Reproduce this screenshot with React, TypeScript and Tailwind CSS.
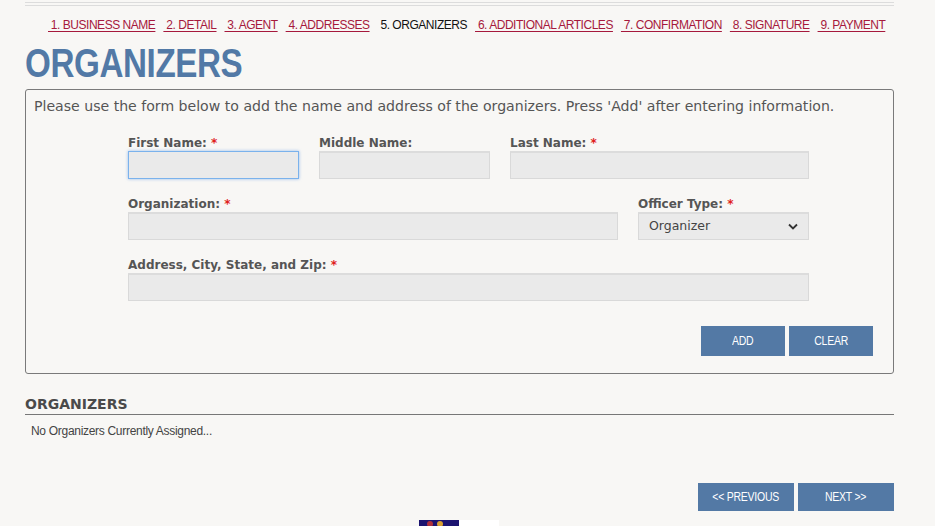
import React from "react";

const navItems = [
  { t: "1. BUSINESS NAME", link: true },
  { t: "2. DETAIL", link: true },
  { t: "3. AGENT", link: true },
  { t: "4. ADDRESSES", link: true },
  { t: "5. ORGANIZERS", link: false },
  { t: "6. ADDITIONAL ARTICLES", link: true },
  { t: "7. CONFIRMATION", link: true },
  { t: "8. SIGNATURE", link: true },
  { t: "9. PAYMENT", link: true },
];

const Label = ({ text, req }: { text: string; req?: boolean }) => (
  <div className="font-['DejaVu_Sans',sans-serif] font-bold text-[12px] leading-[14px] text-[#555] mb-[1px]">
    {text}
    {req && <span className="text-[#e0201b]"> *</span>}
  </div>
);

const inputCls =
  "h-[28px] w-full bg-[#eaeaea] border border-[#d9d9d9] border-t-[2px] border-t-[#dcdcdc] outline-none";

const Btn = ({ w, h, children }: { w: string; h: string; children: React.ReactNode }) => (
  <button className={"bg-[#5379a5] text-white flex items-center justify-center " + w + " " + h}>
    <span className="inline-block scale-x-[0.84] text-[12.5px] leading-[14px] tracking-[-0.3px]">{children}</span>
  </button>
);

export default function App() {
  return (
    <div className="min-h-[526px] bg-[#f8f7f5] font-['Liberation_Sans',Arial,sans-serif]">
      <div className="mx-[25px] w-[869px] pt-[2px]">
        <div className="h-[1px] bg-[#dcdcdc]" />
        <div className="h-[2px]" />
        <div className="h-[1px] bg-[#dcdcdc]" />
        <nav className="flex pl-[23px] mt-[12px] text-[12px] leading-[14px] gap-[8px] tracking-[-0.47px]">
          {navItems.map((n) =>
            n.link ? (
              <a key={n.t} className="text-[#a6193c] underline underline-offset-[2px] whitespace-pre">
                {"\u00a0" + n.t}
              </a>
            ) : (
              <span key={n.t} className="text-[#111] whitespace-pre">
                {"\u00a0" + n.t}
              </span>
            )
          )}
        </nav>
        <div className="mt-[9px] h-[44px]">
          <h1 className="inline-block origin-left scale-x-[0.81] font-['Liberation_Sans',sans-serif] font-bold text-[41px] leading-[44px] text-[#5279a6] tracking-[-0.5px]">
            ORGANIZERS
          </h1>
        </div>
        <div className="mt-[4px] border border-[#7a7a7a] rounded-[3px] pt-[7px] pb-[17px]">
          <p className="pl-[8px] font-['DejaVu_Sans',sans-serif] text-[14.1px] leading-[18px] text-[#555]">
            Please use the form below to add the name and address of the organizers. Press 'Add' after entering information.
          </p>
          <div className="ml-[102px] w-[681px] mt-[21px]">
            <div className="grid grid-cols-[171px_171px_299px] gap-x-[20px]">
              <div>
                <Label text="First Name:" req />
                <div className="h-[28px] w-full bg-[#eaeaea] border border-[#7bb2ec] shadow-[0_0_3px_rgba(90,150,230,0.6)]" />
              </div>
              <div>
                <Label text="Middle Name:" />
                <div className={inputCls} />
              </div>
              <div>
                <Label text="Last Name:" req />
                <div className={inputCls} />
              </div>
            </div>
            <div className="grid grid-cols-[490px_171px] gap-x-[20px] mt-[18px]">
              <div>
                <Label text="Organization:" req />
                <div className={inputCls} />
              </div>
              <div>
                <Label text="Officer Type:" req />
                <div className={inputCls + " flex items-center justify-between px-[10px]"}>
                  <span className="font-['DejaVu_Sans',sans-serif] text-[12.5px] text-[#444]">Organizer</span>
                  <svg width="10" height="7" viewBox="0 0 10 7">
                    <path d="M1 1.5 L5 5.5 L9 1.5" fill="none" stroke="#333" strokeWidth="1.8" />
                  </svg>
                </div>
              </div>
            </div>
            <div className="mt-[18px]">
              <Label text="Address, City, State, and Zip:" req />
              <div className={inputCls} />
            </div>
          </div>
          <div className="flex justify-end gap-[4px] mr-[20px] mt-[25px]">
            <Btn w="w-[84px]" h="h-[30px]">ADD</Btn>
            <Btn w="w-[84px]" h="h-[30px]">CLEAR</Btn>
          </div>
        </div>
        <div className="mt-[22px] border-b border-[#777] pb-[2px]">
          <h2 className="font-['DejaVu_Sans',sans-serif] font-bold text-[14px] leading-[16px] text-[#4a4a4a]">ORGANIZERS</h2>
        </div>
        <p className="pl-[6px] mt-[9px] text-[12px] leading-[14px] text-[#444] tracking-[-0.3px]">
          No Organizers Currently Assigned...
        </p>
        <div className="flex justify-end gap-[4px] mt-[45px]">
          <Btn w="w-[96px]" h="h-[28px]">&lt;&lt; PREVIOUS</Btn>
          <Btn w="w-[96px]" h="h-[28px]">NEXT &gt;&gt;</Btn>
        </div>
        <div className="flex mt-[9px] ml-[394px]">
          <div className="w-[40px] h-[10px] bg-[#1c1470] flex gap-[4px] px-[8px] pt-[1px]">
            <div className="w-[6px] h-[6px] rounded-full bg-[#b0303a]" />
            <div className="w-[6px] h-[6px] rounded-full bg-[#d9a030]" />
          </div>
          <div className="w-[40px] h-[10px] bg-white" />
        </div>
      </div>
    </div>
  );
}
